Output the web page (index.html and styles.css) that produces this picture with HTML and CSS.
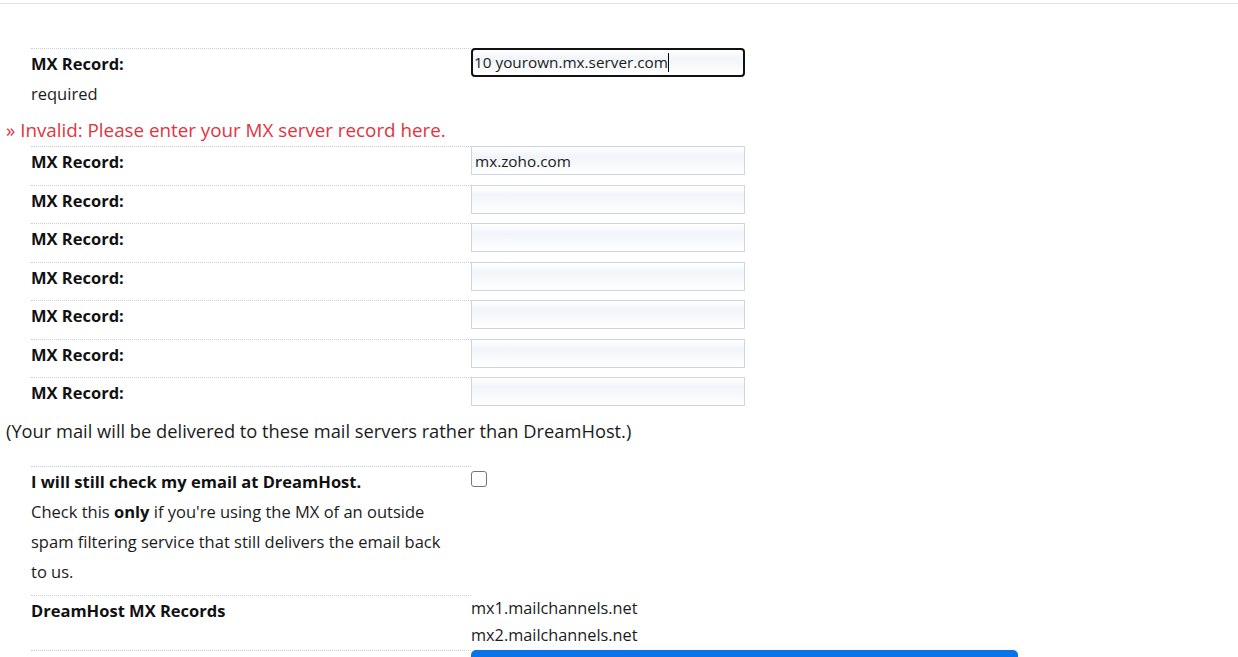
FILE: index.html
```html
<!DOCTYPE html>
<html lang="en">
<head>
<meta charset="utf-8">
<title>MX Records</title>
<link rel="stylesheet" href="styles.css">
</head>
<body>
<div class="topbar"></div>
<form class="mxform">
  <div class="row row-first">
    <div class="label"><strong>MX Record:</strong><br>required</div>
    <div class="field"><div class="input focused">10 yourown.mx.server.com<span class="caret"></span></div></div>
  </div>
  <div class="error">» Invalid: Please enter your MX server record here.</div>
  <div class="row">
    <div class="label"><strong>MX Record:</strong></div>
    <div class="field"><input class="input" type="text" value="mx.zoho.com"></div>
  </div>
  <div class="row">
    <div class="label"><strong>MX Record:</strong></div>
    <div class="field"><input class="input" type="text"></div>
  </div>
  <div class="row">
    <div class="label"><strong>MX Record:</strong></div>
    <div class="field"><input class="input" type="text"></div>
  </div>
  <div class="row">
    <div class="label"><strong>MX Record:</strong></div>
    <div class="field"><input class="input" type="text"></div>
  </div>
  <div class="row">
    <div class="label"><strong>MX Record:</strong></div>
    <div class="field"><input class="input" type="text"></div>
  </div>
  <div class="row">
    <div class="label"><strong>MX Record:</strong></div>
    <div class="field"><input class="input" type="text"></div>
  </div>
  <div class="row">
    <div class="label"><strong>MX Record:</strong></div>
    <div class="field"><input class="input" type="text"></div>
  </div>
  <div class="note">(Your mail will be delivered to these mail servers rather than DreamHost.)</div>
  <div class="row row-check">
    <div class="label"><p class="title">I will still check my email at DreamHost.</p><p class="desc">Check this <b>only</b> if you're using the MX of an outside spam filtering service that still delivers the email back to us.</p></div>
    <div class="field"><input class="checkbox" type="checkbox"></div>
  </div>
  <div class="row row-dh">
    <div class="label"><strong>DreamHost MX Records</strong></div>
    <div class="field values">mx1.mailchannels.net<br>mx2.mailchannels.net</div>
  </div>
  <div class="row row-submit">
    <div class="label"></div>
    <div class="field"><button class="submit" type="button" aria-label="Submit"></button></div>
  </div>
</form>
</body>
</html>
```
FILE: styles.css
```css
html, body {
  margin: 0;
  padding: 0;
  background: #fff;
}
body {
  font-family: "Open Sans", "Liberation Sans", sans-serif;
  font-size: 16.5px;
  color: #1b1b1b;
  overflow: hidden;
  height: 657px;
}
.topbar {
  height: 3px;
  border-bottom: 1px solid #e4e4e4;
}
.mxform {
  padding: 44px 0 0 6px;
}
.row {
  display: flex;
  margin-left: 25px;
  margin-bottom: 7.5px;
}
.label {
  width: 440px;
  border-top: 1px dotted #c3cfda;
  line-height: 30px;
  color: #1b1b1b;
}
.label strong,
.label b,
.title {
  font-weight: 700;
  color: #111;
}
.title,
.desc {
  margin: 0;
  padding-right: 12px;
}
.field {
  width: 274px;
}
.input {
  display: block;
  box-sizing: border-box;
  width: 274px;
  height: 29px;
  margin: 0;
  padding: 0 3px;
  border: 1px solid #cdd6de;
  border-radius: 0;
  background: linear-gradient(to bottom, #ffffff 0%, #f1f5f9 35%, #ffffff 100%);
  font-family: "Open Sans", "Liberation Sans", sans-serif;
  font-size: 15.3px;
  color: #1b1b1b;
  outline: none;
  line-height: 27px;
}
.input.focused {
  border: 2px solid #111;
  border-radius: 4px;
  padding: 0 1px;
  line-height: 25px;
  white-space: nowrap;
}
.caret {
  display: inline-block;
  width: 1px;
  height: 19px;
  background: #000;
  vertical-align: -4px;
}
.row-first {
  margin-bottom: 6px;
}
.error {
  line-height: 30px;
  font-size: 18.8px;
  color: #e0343f;
  margin-bottom: 1px;
}
.note {
  line-height: 30px;
  font-size: 18.3px;
  color: #1b1b1b;
  margin-bottom: 20px;
}
.row-check {
  margin-bottom: 8px;
}
.checkbox {
  -webkit-appearance: none;
  appearance: none;
  display: block;
  box-sizing: border-box;
  width: 16px;
  height: 16px;
  margin: 5px 0 0 0;
  border: 1.5px solid #767676;
  border-radius: 3px;
  background: #fff;
}
.row-dh {
  margin-bottom: 0;
}
.values {
  font-size: 16.3px;
  line-height: 27px;
  padding-bottom: 1px;
  color: #1b1b1b;
}
.row-submit {
  margin-bottom: 0;
}
.row-submit .field {
  width: 547px;
}
.submit {
  display: block;
  width: 547px;
  height: 7px;
  border: 0;
  border-radius: 5px 5px 0 0;
  background: #0a73e8;
  margin: 0;
  padding: 0;
}
```
